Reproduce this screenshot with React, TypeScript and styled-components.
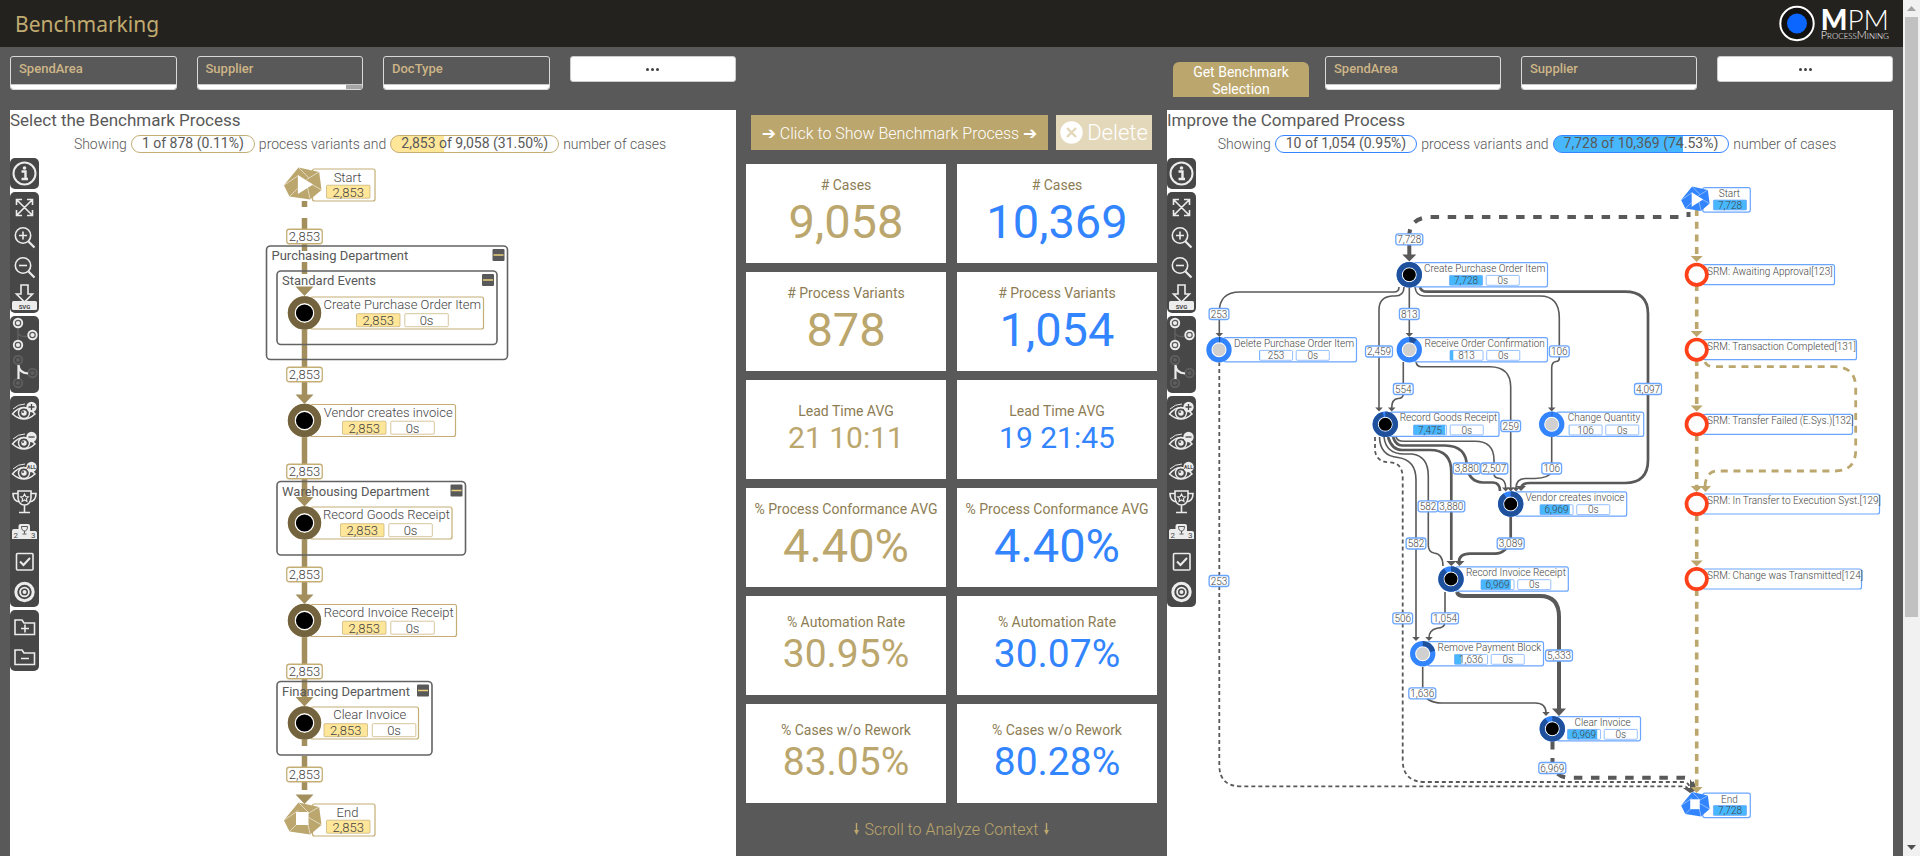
import React from "react";
import styled, { createGlobalStyle } from "styled-components";

const GRAY = "#595959";
const GOLD = "#bba66d";
const BLUE = "#3385ff";

const Global = createGlobalStyle`
  * { box-sizing: border-box; }
  body { margin: 0; font-family: Roboto, "Liberation Sans", sans-serif; color: ${GRAY}; }
  button { font: inherit; cursor: pointer; }
  svg { display: block; }
`;

/* ---------- page frame ---------- */

const Shell = styled.div`
  display: grid;
  grid-template-columns: minmax(0, 1fr) 17px;
  height: 100vh;
  overflow: hidden;
  background: ${GRAY};
`;

const Page = styled.div`
  display: flex;
  flex-direction: column;
  min-height: 0;
  overflow: hidden;
`;

const Header = styled.header`
  flex: none;
  height: 47px;
  padding: 0 14px 0 15px;
  display: flex;
  align-items: center;
  justify-content: space-between;
  background: #24221e;
`;

const Title = styled.h1`
  margin: 0;
  font: 400 21px/28px "Noto Sans", "Open Sans", sans-serif;
  color: #c0ab70;
`;

const Logo = styled.div`
  display: flex;
  align-items: center;
  gap: 6px;
  color: #fff;
  font-family: Lato, sans-serif;
`;

const LogoText = styled.div`
  display: flex;
  flex-direction: column;
`;

const LogoName = styled.span`
  font-size: 28px;
  line-height: 22px;
  font-weight: 300;
  b { font-weight: 900; }
`;

const LogoSub = styled.span`
  font-size: 11px;
  line-height: 10px;
  font-weight: 300;
  font-variant: small-caps;
`;

const Columns = styled.main`
  flex: 1;
  min-height: 0;
  display: grid;
  grid-template-columns: minmax(0, 726fr) minmax(0, 411fr) minmax(0, 726fr);
  gap: 10px;
  padding: 9px 10px 0;
`;

const Column = styled.section`
  display: flex;
  flex-direction: column;
`;

/* ---------- filters ---------- */

const FilterRow = styled.div`
  display: flex;
  align-items: flex-start;
  gap: 20px;
  height: 54px;
`;

const FilterBox = styled.button`
  flex: 1;
  height: 34px;
  padding: 0;
  display: flex;
  flex-direction: column;
  overflow: hidden;
  border: 1px solid #d9d9d9;
  border-radius: 3px;
  background: ${GRAY};
  text-align: left;
`;

const FilterName = styled.span`
  flex: 1;
  padding: 3px 8px;
  font-size: 13px;
  line-height: 17px;
  font-weight: 500;
  color: #cdb587;
`;

const FilterBar = styled.span<{ $excluded?: number }>`
  align-self: stretch;
  height: 5px;
  border-top: 1px solid #c9c9c9;
  background: linear-gradient(to left, #a6a6a6 ${(p) => p.$excluded ?? 0}%, #fff 0);
`;

const MoreButton = styled.button`
  flex: 1;
  height: 26px;
  padding: 0;
  display: flex;
  align-items: center;
  justify-content: center;
  gap: 2px;
  border: 1px solid #ccc;
  border-radius: 3px;
  background: #fff;
  i { width: 3px; height: 3px; border-radius: 50%; background: #404040; }
`;

const GetSelection = styled.button`
  flex: none;
  width: 136px;
  height: 35px;
  margin: 6px -4px 0 6px;
  padding: 2px 16px;
  border: 0;
  border-radius: 6px 6px 0 0;
  background: ${GOLD};
  color: #fff;
  font-size: 14px;
  line-height: 17px;
`;

/* ---------- process panels ---------- */

const Panel = styled.div`
  flex: 1;
  background: #fff;
`;

const PanelTitle = styled.h2`
  margin: 0;
  font-size: 17px;
  line-height: 20px;
  font-weight: 400;
`;

const Summary = styled.p`
  margin: 0;
  height: 28px;
  display: flex;
  justify-content: center;
  align-items: flex-start;
  gap: 4px;
  padding: 5px 6px 0 0;
  font-size: 14px;
  line-height: 18px;
  font-weight: 300;
`;

const Pill = styled.span<{ $line: string; $fill?: string; $share?: number }>`
  height: 18px;
  padding: 0 10px;
  border: 1px solid ${(p) => p.$line};
  border-radius: 9px;
  font-size: 14px;
  line-height: 14px;
  font-weight: 400;
  background: linear-gradient(to right, ${(p) => p.$fill ?? "#fff"} ${(p) => p.$share ?? 0}%, #fff 0);
`;

const Workspace = styled.div`
  display: flex;
  align-items: flex-start;
`;

const Tools = styled.div`
  flex: none;
  width: 29px;
  display: flex;
  flex-direction: column;
  gap: 3px;
`;

const ToolGroup = styled.div`
  padding-top: 1px;
  border-radius: 5px;
  background: #474747;
`;

const ToolButton = styled.button<{ $tall?: boolean }>`
  width: 29px;
  height: ${(p) => (p.$tall ? 38 : 30)}px;
  padding: 0;
  border: 0;
  background: none;
  display: flex;
  align-items: center;
  justify-content: center;
`;

const Canvas = styled.svg`
  flex: 1;
  min-width: 0;
  font-family: Roboto, sans-serif;
  font-weight: 300;
  overflow: visible;
`;

/* ---------- KPI column ---------- */

const Actions = styled.div`
  display: flex;
  justify-content: center;
  gap: 8px;
  padding: 59px 5px 14px;
`;

const ShowButton = styled.button`
  flex: 1;
  height: 35px;
  padding: 0;
  border: 0;
  background: ${GOLD};
  color: #fff;
  font-size: 16px;
  font-weight: 300;
  white-space: nowrap;
  b { font: 17px "DejaVu Sans", sans-serif; }
`;

const DeleteButton = styled.button`
  flex: none;
  width: 96px;
  height: 35px;
  padding: 0;
  display: flex;
  align-items: center;
  justify-content: center;
  gap: 4px;
  border: 0;
  background: #e3d8ba;
  color: #fff;
  font-size: 22px;
  font-weight: 300;
`;

const Cards = styled.div`
  display: grid;
  grid-template-columns: 1fr 1fr;
  gap: 9px 11px;
`;

const Card = styled.div`
  height: 99px;
  padding-bottom: 2px;
  display: flex;
  flex-direction: column;
  align-items: center;
  justify-content: center;
  background: #fff;
  white-space: nowrap;
`;

const CardLabel = styled.span`
  font-size: 14px;
  line-height: 20px;
  color: #8c7c54;
`;

const CardValue = styled.span<{ $size: number; $color: string }>`
  font-size: ${(p) => p.$size}px;
  line-height: 1.15;
  color: ${(p) => p.$color};
`;

const ScrollHint = styled.p`
  margin: 0;
  height: 52px;
  display: flex;
  align-items: center;
  justify-content: center;
  gap: 6px;
  font-size: 16px;
  font-weight: 300;
  color: ${GOLD};
`;

/* ---------- scroll bar ---------- */

const ScrollTrack = styled.div`
  display: grid;
  grid-template-rows: 17px 1fr 17px;
  justify-items: center;
  align-items: center;
  background: #f1f1f1;
`;

const ScrollThumb = styled.div`
  align-self: start;
  width: 13px;
  height: 73%;
  background: #c1c1c1;
`;

/* ---------- toolbar icons ---------- */

const W = "#ececec";

const Icon = ({ children, h = 30 }: { children: React.ReactNode; h?: number }) => (
  <svg width="29" height={h} viewBox={`0 0 29 ${h}`} fill="none" stroke={W} strokeWidth="1.6">
    {children}
  </svg>
);

const Eye = ({ children }: { children: React.ReactNode }) => (
  <Icon>
    <path d="M2.500 17Q13.500 4 25 17Q14 27 2.500 17Z" strokeWidth="1.500" />
    <path d="M3 12Q8 7 15 7" strokeWidth="1" />
    <circle cx="14" cy="16" r="5.500" strokeWidth="1.400" />
    <circle cx="14" cy="16" r="2.700" fill={W} stroke="none" />
    <circle cx="13" cy="15" r="1" fill="#474747" stroke="none" />
    <circle cx="21.500" cy="10" r="5.200" fill={W} stroke="none" />
    {children}
  </Icon>
);

const Ring = ({ x, y, dim }: { x: number; y: number; dim?: boolean }) => (
  <g stroke="none">
    <circle cx={x} cy={y} r="5.200" fill={dim ? "#5e5e5e" : W} />
    <circle cx={x} cy={y} r="2.700" fill="none" stroke={dim ? "#474747" : "#5a5a5a"} strokeWidth="1.200" />
  </g>
);

const icons: Record<string, React.ReactNode> = {
  Info: (
    <Icon>
      <circle cx="14.500" cy="14.500" r="11" strokeWidth="2" />
      <circle cx="14.500" cy="9" r="1.800" fill={W} stroke="none" />
      <path d="M11.500 12.500H15.500V19.500M11.500 20H18" strokeWidth="2.400" />
    </Icon>
  ),
  Fit: (
    <Icon>
      <path d="M7 7L22 22M22 7L7 22M6.500 12V6.500H12M17 6.500H22.500V12M22.500 17V22.500H17M12 22.500H6.500V17" />
    </Icon>
  ),
  "Zoom in": (
    <Icon>
      <circle cx="13" cy="12.500" r="7.700" />
      <path d="M9 12.500H17M13 8.500V16.500" />
      <path d="M18.500 18.500L24.500 24.500" strokeWidth="2.200" />
    </Icon>
  ),
  "Zoom out": (
    <Icon>
      <circle cx="13" cy="12.500" r="7.700" />
      <path d="M9 12.500H17" />
      <path d="M18.500 18.500L24.500 24.500" strokeWidth="2.200" />
    </Icon>
  ),
  "Save SVG": (
    <Icon>
      <path d="M11 2H18V11H22.500L14.500 19L6.500 11H11Z" />
      <rect x="2" y="18" width="25" height="9" rx="1.500" fill={W} stroke="none" />
      <text x="14.500" y="25.500" fontSize="6" fontWeight="700" textAnchor="middle" fill="#474747" stroke="none">SVG</text>
    </Icon>
  ),
  "Show nodes": (
    <Icon h={38}>
      <path d="M8 8V28M8 16Q10 21 20 19" stroke="#5e5e5e" />
      <Ring x={8} y={6} />
      <Ring x={22.500} y={18} />
      <Ring x={8} y={28} />
    </Icon>
  ),
  "Show edges": (
    <Icon h={38}>
      <Ring x={8} y={5} dim />
      <Ring x={22.500} y={18} dim />
      <Ring x={8} y={28} dim />
      <path d="M8.500 10V24M8.500 10Q9 18 18 18.500" strokeWidth="2.200" />
    </Icon>
  ),
  "Show more": (
    <Eye><path d="M18.500 10H24.500M21.500 7V13" stroke="#474747" strokeWidth="1.300" /></Eye>
  ),
  "Show less": (
    <Eye><path d="M18.500 10H24.500" stroke="#474747" strokeWidth="1.300" /></Eye>
  ),
  "Show all": (
    <Eye><text x="21.500" y="12" fontSize="5" fontWeight="700" textAnchor="middle" fill="#474747" stroke="none">ALL</text></Eye>
  ),
  Trophy: (
    <Icon>
      <path d="M8 4H21V11Q20 18 14.500 18Q9 18 8 11ZM14.500 18V25M9 25.500H20M8 6.500H3Q3 14 9.500 15M21 6.500H26Q26 14 19.500 15" />
      <path d="M14.500 7L15.700 9.600L18.400 9.900L16.400 11.700L17 14.400L14.500 13L12 14.400L12.600 11.700L10.600 9.900L13.300 9.600Z" strokeWidth="1.100" />
    </Icon>
  ),
  Podium: (
    <Icon>
      <path d="M4 12H8.500V9Q8.500 7 10.500 7H18Q20 7 20 9V14H25Q27 14 27 16V22H2V14Q2 12 4 12Z" fill={W} stroke="none" />
      <path d="M11.500 9.500H17.500Q17.500 14 14.500 14Q11.500 14 11.500 9.500ZM14.500 14V16.500M12.500 17H16.500" stroke="#474747" strokeWidth="0.900" />
      <g fontSize="8" fill="#474747" stroke="none">
        <text x="3.500" y="20.500">2</text>
        <text x="21" y="21">3</text>
      </g>
    </Icon>
  ),
  Select: (
    <Icon>
      <rect x="6.500" y="6.500" width="16.500" height="16.500" rx="1" />
      <path d="M10 14.500L13.500 18L20 11" strokeWidth="2" />
    </Icon>
  ),
  Target: (
    <Icon>
      <circle cx="14.500" cy="15" r="8.700" strokeWidth="3" />
      <circle cx="14.500" cy="15" r="4.400" strokeWidth="1.800" />
      <circle cx="14.500" cy="15" r="2" fill={W} stroke="none" />
    </Icon>
  ),
  "Expand groups": (
    <Icon>
      <path d="M5 23.500V9H12L14 12H24.500V23.500ZM11 17.500H19M15 13.500V21.500" />
    </Icon>
  ),
  "Collapse groups": (
    <Icon>
      <path d="M5 23.500V9H12L14 12H24.500V23.500ZM11 17.500H19" />
    </Icon>
  ),
};

const toolGroups = [
  ["Info"],
  ["Fit", "Zoom in", "Zoom out", "Save SVG"],
  ["Show nodes", "Show edges"],
  ["Show more", "Show less", "Show all", "Trophy", "Podium", "Select", "Target"],
  ["Expand groups", "Collapse groups"],
];

const Toolbar = ({ groups }: { groups: string[][] }) => (
  <Tools>
    {groups.map((g, i) => (
      <ToolGroup key={i}>
        {g.map((name) => (
          <ToolButton key={name} aria-label={name} $tall={name === "Show nodes" || name === "Show edges"}>
            {icons[name]}
          </ToolButton>
        ))}
      </ToolGroup>
    ))}
  </Tools>
);

/* ---------- diagram parts ---------- */

type Skin = {
  k: number;
  font: number;
  line: string;
  fill: string;
  ring: string;
  ringLow: string;
  gem: string;
};

const goldSkin: Skin = { k: 1, font: 13, line: "#c4ae74", fill: "#ffe699", ring: "#73643f", ringLow: GOLD, gem: GOLD };
const blueSkin: Skin = { k: 0.76, font: 10, line: "#6aa5ff", fill: "#47b8ff", ring: "#1f509c", ringLow: BLUE, gem: BLUE };

const Badge = ({ s, x, y, text, share = 0 }: { s: Skin; x: number; y: number; text: string; share?: number }) => {
  const w = 43.500 * s.k;
  const h = 13 * s.k;
  return (
    <g>
      <rect x={x} y={y} width={w} height={h} rx="1" fill="#fff" />
      <rect x={x} y={y} width={w * share} height={h} fill={s.fill} />
      <rect x={x} y={y} width={w} height={h} rx="1" fill="none" stroke={s.line} strokeOpacity="0.700" />
      <text x={x + w / 2} y={y + 11.500 * s.k} fontSize={s.font} textAnchor="middle" fill="#444">{text}</text>
    </g>
  );
};

type NodeProps = { s: Skin; x: number; y: number; right: number; badge: number; label: string; count: string; share: number };

const Activity = ({ s, x, y, right, badge, label, count, share }: NodeProps) => {
  const r = 13.300 * s.k;
  const ring = 2 * Math.PI * r;
  const major = share > 0.500;
  const left = x + 16.500 * s.k;
  return (
    <g>
      <rect x={x + 6 * s.k} y={y - 16 * s.k} width={right - x - 6 * s.k} height={32 * s.k} rx="2" fill="#fff" fillOpacity="0.800" stroke={s.line} strokeWidth="1.200" />
      <text x={(left + right) / 2} y={y - 4 * s.k} fontSize={s.font} textAnchor="middle" fill="#444">{label}</text>
      <Badge s={s} x={badge} y={y + 0.700} text={count} share={share} />
      <Badge s={s} x={badge + 48.300 * s.k} y={y + 0.700} text="0s" />
      <circle cx={x} cy={y} r={16.700 * s.k} fill="#fff" />
      <circle cx={x} cy={y} r={r} fill="none" stroke={s.ringLow} strokeWidth={6.800 * s.k} />
      <circle cx={x} cy={y} r={r} fill="none" stroke={s.ring} strokeWidth={6.800 * s.k}
        strokeDasharray={`${ring * share} ${ring}`} transform={`rotate(-90 ${x} ${y})`} />
      <circle cx={x} cy={y} r={8.600 * s.k} fill={major ? "#000" : "#d0d0d0"} />
    </g>
  );
};

const Terminal = ({ s, x, y, label, count, end }: { s: Skin; x: number; y: number; label: string; count: string; end?: boolean }) => {
  const k = s.k;
  return (
    <g>
      <rect x={x + 8 * k} y={y - 15.500 * k} width={62.500 * k} height={32 * k} rx="2" fill="#fff" stroke={s.line} strokeWidth="1.200" />
      <text x={x + 43 * k} y={y - 3 * k} fontSize={s.font} textAnchor="middle" fill="#444">{label}</text>
      <Badge s={s} x={x + 22 * k} y={y + 0.700 * k} text={count} share={1} />
      <g transform={`translate(${x} ${y}) scale(${k})`}>
        <path d="M-20.600 0.700L-6 -17L14.700 -12.600L17 5.400L5.700 15L-15 12Z" fill={s.gem} />
        <path d="M-20.600 0.700L-6 -9M-6 -17L4 -7M14.700 -12.600L2 -5M17 5.400L4 -2M5.700 15L3 3M-15 12L-7 4" stroke="#fff" strokeOpacity="0.700" strokeWidth="0.800" />
        {end ? <rect x="-8.500" y="-7.500" width="12.500" height="13" fill="#fff" /> : <path d="M-6.600 -9.500V9.500L8.500 0Z" fill="#fff" />}
      </g>
    </g>
  );
};

const EdgeLabel = ({ s, x, y, text }: { s: Skin; x: number; y: number; text: string }) => {
  const w = (text.length > 3 ? 35.500 : 26) * s.k;
  const h = 14.500 * s.k;
  return (
    <g>
      <rect x={x - w / 2} y={y - h / 2} width={w} height={h} rx="2.500" fill="#fff" stroke={s.line} strokeWidth="1.300" />
      <text x={x} y={y + 4.800 * s.k} fontSize={s.font} textAnchor="middle" fill="#444">{text}</text>
    </g>
  );
};

const Arrow = ({ x, y, w, h, color }: { x: number; y: number; w: number; h: number; color: string }) => (
  <path d={`M${x - w / 2} ${y - h}H${x + w / 2}L${x} ${y}Z`} fill={color} />
);

/* ---------- benchmark diagram ---------- */

const GroupBox = ({ x, y, w, h, label }: { x: number; y: number; w: number; h: number; label: string }) => (
  <g>
    <rect x={x} y={y} width={w} height={h} rx="4" fill="none" stroke="#636363" strokeWidth="1.600" />
    <text x={x + 5} y={y + 14} fontSize="13" fontWeight="400" fill={GRAY}>{label}</text>
    <rect x={x + w - 15} y={y + 3} width="12" height="12" rx="1" fill={GRAY} />
    <path d={`M${x + w - 14} ${y + 9}h10`} stroke="#ecd07e" strokeWidth="1.500" />
  </g>
);

const goldEdge = "#a38f5e";

const benchmarkNodes = [
  { y: 313, right: 483.500, badge: 356.500, label: "Create Purchase Order Item" },
  { y: 420.500, right: 455.500, badge: 342.500, label: "Vendor creates invoice" },
  { y: 523, right: 452, badge: 340.500, label: "Record Goods Receipt" },
  { y: 620.500, right: 456.500, badge: 342.500, label: "Record Invoice Receipt" },
  { y: 723, right: 418.500, badge: 324, label: "Clear Invoice" },
];

const BenchmarkDiagram = () => (
  <Canvas viewBox="39 158 697 698" role="img" aria-label="Benchmark process">
    <g stroke={goldEdge} strokeWidth="5.500" fill="none">
      <path d="M304.500 201V207M304.500 218V251M304.500 262V274" />
      <path d="M304.500 329V395M304.500 437V498M304.500 540V596M304.500 637V698M304.500 739V746M304.500 756V790" />
    </g>
    <GroupBox x={266.500} y={246} w={241} h={113.500} label="Purchasing Department" />
    <GroupBox x={277} y={271} w={220} h={73.500} label="Standard Events" />
    <GroupBox x={277} y={481.500} w={188.500} h={73.500} label="Warehousing Department" />
    <GroupBox x={277} y={681.500} w={155} h={73.500} label="Financing Department" />
    {[296, 404, 506.500, 604, 706.500, 804].map((y) => (
      <Arrow key={y} x={304.500} y={y} w={18} h={9.500} color={goldEdge} />
    ))}
    {[236.500, 374.500, 471.500, 574.500, 671.500, 774.500].map((y) => (
      <EdgeLabel key={y} s={goldSkin} x={304.500} y={y} text="2,853" />
    ))}
    {benchmarkNodes.map((n) => (
      <Activity key={n.label} s={goldSkin} x={304.500} count="2,853" share={1} {...n} />
    ))}
    <Terminal s={goldSkin} x={304.500} y={184.500} label="Start" count="2,853" />
    <Terminal s={goldSkin} x={304.500} y={819.500} label="End" count="2,853" end />
  </Canvas>
);

/* ---------- compared diagram ---------- */

const comparedNodes = [
  { x: 1409.300, y: 274.700, right: 1547.500, badge: 1449.500, label: "Create Purchase Order Item", count: "7,728", share: 1 },
  { x: 1219, y: 349.700, right: 1356.500, badge: 1259.500, label: "Delete Purchase Order Item", count: "253", share: 0.020 },
  { x: 1409.300, y: 349.700, right: 1547.500, badge: 1450, label: "Receive Order Confirmation", count: "813", share: 0.100 },
  { x: 1385.300, y: 424.300, right: 1499, badge: 1413.500, label: "Record Goods Receipt", count: "7,475", share: 0.960 },
  { x: 1551.700, y: 424.300, right: 1643.700, badge: 1569, label: "Change Quantity", count: "106", share: 0.010 },
  { x: 1510.700, y: 504, right: 1626.700, badge: 1540, label: "Vendor creates invoice", count: "6,969", share: 0.900 },
  { x: 1451, y: 579, right: 1568.300, badge: 1481, label: "Record Invoice Receipt", count: "6,969", share: 0.900 },
  { x: 1422.700, y: 653.700, right: 1543.500, badge: 1454.500, label: "Remove Payment Block", count: "1,636", share: 0.210 },
  { x: 1552.300, y: 728.700, right: 1640.500, badge: 1567.500, label: "Clear Invoice", count: "6,969", share: 0.900 },
];

const srmNodes = [
  { y: 274.700, right: 1834.500, label: "SRM: Awaiting Approval[123]" },
  { y: 349.700, right: 1856.500, label: "SRM: Transaction Completed[131]" },
  { y: 424.300, right: 1852.500, label: "SRM: Transfer Failed (E.Sys.)[132]" },
  { y: 504, right: 1879.500, label: "SRM: In Transfer to Execution Syst.[129]" },
  { y: 579, right: 1861.500, label: "SRM: Change was Transmitted[124]" },
];

const thinEdges = [
  "M1399 287Q1399 292 1394 292H1240Q1219.300 292 1219.300 312V333",
  "M1404 287Q1404 296 1395 296H1392Q1379 297 1379 310V408",
  "M1409.300 287V333",
  "M1415 287Q1416 296 1424 296H1540Q1559.300 296 1559.300 318V358Q1559.300 361.500 1556 361.500Q1551.700 362 1551.700 368V408",
  "M1403.300 362V394Q1403 398.500 1398 398.500Q1391.700 399 1391.700 408",
  "M1416 362Q1417 366.700 1421 366.700H1490Q1510.700 367 1510.700 387V488",
  "M1551.700 437V472Q1549 478 1535 478.500H1525Q1516 479 1516 488",
  "M1396 437Q1397 441.300 1404 441.300H1475Q1494 441.300 1494 460V474Q1494 478 1500 478.500Q1505.700 480 1505.700 488",
  "M1384 437Q1386 454 1404 454H1412Q1428.300 456 1428.300 476V545Q1428.300 552 1434 553Q1443 554 1443 566",
  "M1379.500 437Q1380 456 1398 457.500Q1416 460 1416 480V638",
  "M1445 592V622Q1445 628 1437 628.300Q1429 630 1429 638",
  "M1422.700 667V690Q1425 703 1442 703H1535Q1546 703 1546 713",
];

const comparedLabels: [number, number, string][] = [
  [1409.300, 239.300, "7,728"], [1219, 314, "253"], [1409.300, 314, "813"], [1379, 351.500, "2,459"],
  [1403.300, 389, "554"], [1510.700, 426, "259"], [1559.300, 351.300, "106"], [1551.700, 468.500, "106"],
  [1648, 389, "4,097"], [1466.700, 468.500, "3,880"], [1494.300, 468.500, "2,507"], [1428, 506.300, "582"],
  [1451.300, 506.300, "3,880"], [1416, 543.500, "582"], [1510.700, 543.500, "3,089"], [1402.700, 618.300, "506"],
  [1445, 618.300, "1,054"], [1559, 655.500, "5,333"], [1219, 581, "253"], [1422.300, 693.300, "1,636"],
  [1552.300, 768, "6,969"],
];

const thinArrows = [
  [1219.300, 337], [1379, 411.500], [1391.700, 411.500], [1409.300, 337], [1551.700, 411.500], [1505.700, 491.500],
  [1510.700, 491.500], [1516, 491.500], [1416, 641], [1429, 641], [1546, 716],
];

const ComparedDiagram = () => (
  <Canvas viewBox="1196 158 697 698" role="img" aria-label="Compared process">
    <g fill="none" stroke={GRAY} strokeWidth="1.600">
      {thinEdges.map((d) => <path key={d} d={d} />)}
    </g>
    <g fill="none" stroke={GRAY} strokeWidth="2.700">
      <path d="M1420 287Q1421 292 1428 291.700H1625Q1648 291.700 1648 314V460Q1648 483 1625 483H1530Q1522 483 1521 488" />
      <path d="M1393 437Q1396 445.500 1402 445.500H1445Q1466.700 446 1466.700 466Q1469 482 1483 482.500H1493Q1500 483 1500 491" />
      <path d="M1388 437Q1392 450 1402 450H1430Q1451.300 450 1451.300 472V560" />
      <path d="M1510.700 517V538Q1508 553 1495 553.700H1470Q1459 554 1459 562" />
    </g>
    <g fill="none" stroke={GRAY} strokeWidth="4">
      <path d="M1457 592Q1458 596 1464 596H1540Q1559 596 1559 617V709" />
      <path d="M1409.300 245V255" />
    </g>
    <g fill="none" stroke={GRAY} strokeWidth="1.800" strokeDasharray="4 3">
      <path d="M1375 437V450Q1376 462.300 1390 462.300Q1402.700 463 1402.700 478V760Q1402.700 782 1425 782H1684Q1690 783 1690 790" />
      <path d="M1219.300 362V765Q1219.300 786.300 1241 786.300H1684Q1688 787 1689 791" />
    </g>
    <g fill="none" stroke={GRAY} strokeWidth="4" strokeDasharray="8.500 8.600">
      <path d="M1678.500 217H1430Q1409.300 218 1409.300 236" />
      <path d="M1688.500 212V217" />
      <path d="M1552.500 741V765Q1556 777.700 1570 777.700H1684Q1692 778 1694 788" />
    </g>
    <g fill="none" stroke={GOLD} strokeWidth="3.600" strokeDasharray="7 5.700">
      <path d="M1696.700 209V258M1696.700 284V333M1696.700 359V407M1696.700 434V486M1696.700 514V562M1696.700 589V788" />
      <path d="M1705 362Q1707 366.700 1714 366.700H1835Q1855.700 367 1855.700 388V450Q1855.700 471 1835 471H1716Q1706 472 1705 486" strokeWidth="2.800" />
    </g>
    {thinArrows.map(([x, y]) => <Arrow key={`${x}-${y}`} x={x} y={y} w={7.500} h={4} color={GRAY} />)}
    <Arrow x={1409.300} y={261.500} w={14} h={7} color={GRAY} />
    <Arrow x={1559} y={716} w={14} h={7.500} color={GRAY} />
    <Arrow x={1451.300} y={566} w={10} h={5} color={GRAY} />
    <Arrow x={1459.500} y={566} w={10} h={5} color={GRAY} />
    <Arrow x={1521} y={491} w={10} h={5} color={GRAY} />
    <path d="M1683 788H1690V779L1697 790L1690 793Z" fill={GRAY} />
    {[262, 337, 411.500, 492, 566.500, 793].map((y) => (
      <Arrow key={y} x={1696.700} y={y} w={12} h={6} color={GOLD} />
    ))}
    <Arrow x={1705.500} y={492} w={11} h={6} color={GOLD} />
    {srmNodes.map((n) => (
      <g key={n.label}>
        <rect x="1703" y={n.y - 10} width={n.right - 1703} height="20" rx="2" fill="#fff" fillOpacity="0.600" stroke={blueSkin.line} strokeWidth="1.200" />
        <text x="1707" y={n.y} fontSize="10" fill="#444">{n.label}</text>
        <circle cx="1696.700" cy={n.y} r="10.200" fill="#fff" stroke="#ff4019" strokeWidth="3.700" />
      </g>
    ))}
    {comparedNodes.map((n) => <Activity key={n.label} s={blueSkin} {...n} />)}
    {comparedLabels.map(([x, y, t]) => <EdgeLabel key={`${x}-${y}`} s={blueSkin} x={x} y={y} text={t} />)}
    <Terminal s={blueSkin} x={1696.700} y={199.500} label="Start" count="7,728" />
    <Terminal s={blueSkin} x={1696.700} y={805} label="End" count="7,728" end />
  </Canvas>
);

/* ---------- composition ---------- */

const Filter = ({ name, excluded }: { name: string; excluded?: number }) => (
  <FilterBox>
    <FilterName>{name}</FilterName>
    <FilterBar $excluded={excluded} />
  </FilterBox>
);

const More = () => (
  <MoreButton aria-label="More filters"><i /><i /><i /></MoreButton>
);

const DownArrow = () => (
  <svg width="5" height="12" viewBox="0 0 5 12" aria-hidden="true">
    <path d="M2.500 0V9" stroke={GOLD} strokeWidth="1.400" />
    <path d="M0 7H5L2.500 12Z" fill={GOLD} />
  </svg>
);

const kpis = [
  { label: "# Cases", left: "9,058", right: "10,369", size: 47 },
  { label: "# Process Variants", left: "878", right: "1,054", size: 47 },
  { label: "Lead Time AVG", left: "21 10:11", right: "19 21:45", size: 30 },
  { label: "% Process Conformance AVG", left: "4.40%", right: "4.40%", size: 47 },
  { label: "% Automation Rate", left: "30.95%", right: "30.07%", size: 39 },
  { label: "% Cases w/o Rework", left: "83.05%", right: "80.28%", size: 39 },
];

export default function App() {
  return (
    <Shell>
      <Global />
      <Page>
        <Header>
          <Title>Benchmarking</Title>
          <Logo>
            <svg width="36" height="37" viewBox="0 0 36 37" aria-hidden="true">
              <circle cx="18" cy="18.500" r="16.700" fill="#111" stroke="#fff" strokeWidth="2" />
              <circle cx="18" cy="18.500" r="10" fill="#0a66ff" />
            </svg>
            <LogoText>
              <LogoName><b>M</b>PM</LogoName>
              <LogoSub>ProcessMining</LogoSub>
            </LogoText>
          </Logo>
        </Header>
        <Columns>
          <Column>
            <FilterRow>
              <Filter name="SpendArea" />
              <Filter name="Supplier" excluded={10} />
              <Filter name="DocType" />
              <More />
            </FilterRow>
            <Panel>
              <PanelTitle>Select the Benchmark Process</PanelTitle>
              <Summary>
                Showing
                <Pill $line="#c4ae74">1 of 878 (0.11%)</Pill>
                process variants and
                <Pill $line="#c4ae74" $fill="#ffe699" $share={32}>2,853 of 9,058 (31.50%)</Pill>
                number of cases
              </Summary>
              <Workspace>
                <Toolbar groups={toolGroups} />
                <BenchmarkDiagram />
              </Workspace>
            </Panel>
          </Column>

          <Column>
            <Actions>
              <ShowButton><b>➔</b> Click to Show Benchmark Process <b>➔</b></ShowButton>
              <DeleteButton>
                <svg width="23" height="23" viewBox="0 0 23 23" aria-hidden="true">
                  <circle cx="11.500" cy="11.500" r="11.200" fill="#fff" />
                  <path d="M7 7L16 16M16 7L7 16" stroke="#e3d8ba" strokeWidth="2.400" />
                </svg>
                Delete
              </DeleteButton>
            </Actions>
            <Cards>
              {kpis.map((k) => (
                <React.Fragment key={k.label}>
                  <Card>
                    <CardLabel>{k.label}</CardLabel>
                    <CardValue $size={k.size} $color={GOLD}>{k.left}</CardValue>
                  </Card>
                  <Card>
                    <CardLabel>{k.label}</CardLabel>
                    <CardValue $size={k.size} $color={BLUE}>{k.right}</CardValue>
                  </Card>
                </React.Fragment>
              ))}
            </Cards>
            <ScrollHint><DownArrow />Scroll to Analyze Context<DownArrow /></ScrollHint>
          </Column>

          <Column>
            <FilterRow>
              <GetSelection>Get Benchmark Selection</GetSelection>
              <Filter name="SpendArea" />
              <Filter name="Supplier" />
              <More />
            </FilterRow>
            <Panel>
              <PanelTitle>Improve the Compared Process</PanelTitle>
              <Summary>
                Showing
                <Pill $line={BLUE}>10 of 1,054 (0.95%)</Pill>
                process variants and
                <Pill $line={BLUE} $fill="#47b8ff" $share={74}>7,728 of 10,369 (74.53%)</Pill>
                number of cases
              </Summary>
              <Workspace>
                <Toolbar groups={toolGroups.slice(0, 4)} />
                <ComparedDiagram />
              </Workspace>
            </Panel>
          </Column>
        </Columns>
      </Page>
      <ScrollTrack>
        <svg width="9" height="5" viewBox="0 0 9 5"><path d="M0 5H9L4.500 0Z" fill="#a3a3a3" /></svg>
        <ScrollThumb />
        <svg width="9" height="5" viewBox="0 0 9 5"><path d="M0 0H9L4.500 5Z" fill="#505050" /></svg>
      </ScrollTrack>
    </Shell>
  );
}
